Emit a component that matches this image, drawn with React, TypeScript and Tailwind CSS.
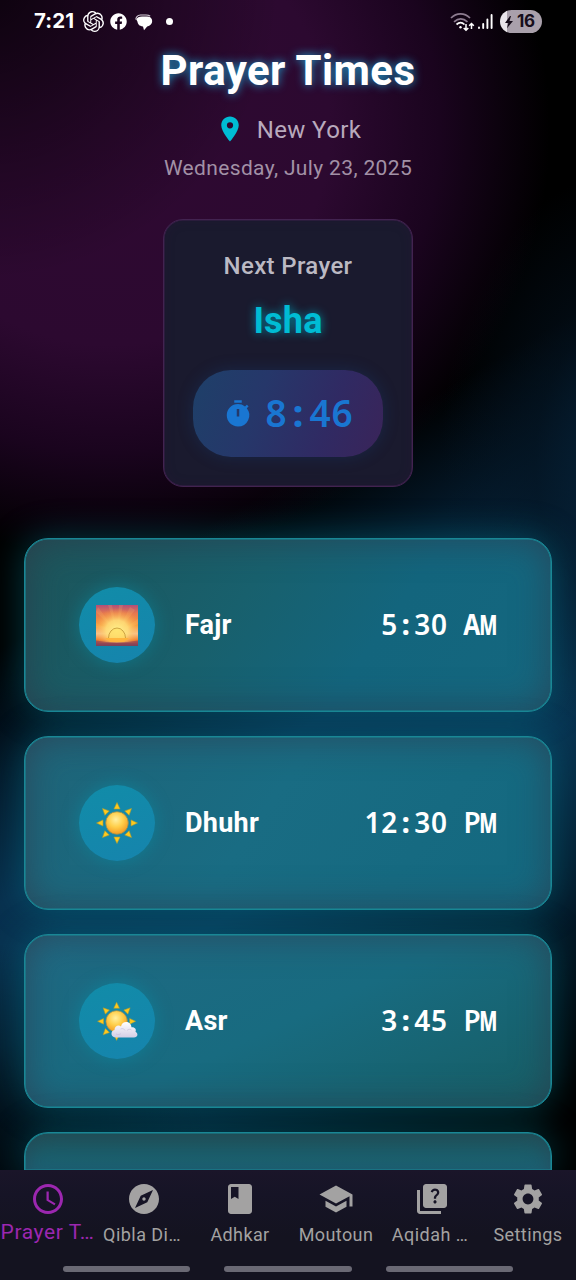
import type { ReactNode } from "react";
import {
  MdAccessTime,
  MdBook,
  MdExplore,
  MdLocationOn,
  MdQuiz,
  MdSchool,
  MdSettings,
  MdTimer,
} from "react-icons/md";
import { FaFacebook } from "react-icons/fa";
import { SiOpenai } from "react-icons/si";

function StatusBar() {
  return (
    <div className="flex h-[43px] items-center justify-between pl-[34px] pr-[34px] text-white">
      <div className="flex items-center">
        <span className="w-[49px] font-['Inter',sans-serif] text-[20.500px] font-bold leading-none tracking-[0.100px]">7:21</span>
        <SiOpenai className="h-[21px] w-[21px]" />
        <FaFacebook className="ml-[6px] h-[17px] w-[17px]" />
        <svg className="ml-[8px] mt-[1px] h-[17px] w-[18px]" viewBox="0 0 18 17">
          <path d="M.8 5.500C1 3 2.800 1.200 5.500 1h5.500c2 0 3.300.4 4.200 1.100" fill="none" stroke="#d9d2dc" strokeWidth="1.100" />
          <path d="M7 2.400h5c3.300 0 5.200 2 5.200 4.700 0 2.900-2 4.800-5 5.300L9 16.200 8 12.400C4 12.200 2.700 10 2.500 7.800L1.300 5.500C2 3.500 4 2.400 7 2.400z" fill="white" />
        </svg>
        <span className="ml-[13px] h-[7px] w-[7px] rounded-full bg-white" />
      </div>
      <div className="flex items-center">
        <svg className="h-[20px] w-[25px]" viewBox="0 0 25 20" fill="none" strokeWidth="1.700">
          <path d="M1 6C6.500.6 14.500.6 20 6" stroke="#8d7c90" />
          <path d="M4 9.800C8.500 5.800 13 5.800 17.500 9.800" stroke="#8d7c90" />
          <path d="M6.500 12.500c2.700-2.400 5.500-2.400 8 0" stroke="#fff" />
          <circle cx="10.500" cy="15.300" r="1.200" fill="white" />
          <path d="M16 12v6M13.700 16l2.300 2.300 2.300-2.300M21.500 17v-5.500M19.200 13.800l2.300-2.300 2.300 2.300" stroke="#fff" strokeWidth="1.500" />
        </svg>
        <svg className="ml-[2px] h-[17px] w-[17px]" viewBox="0 0 17 17" stroke="white" strokeWidth="1.900" strokeLinecap="round">
          <path d="M2 14.500v.5M6.200 11v4M10.400 6.500v8.500M14.600 2v13" />
        </svg>
        <span className="ml-[6px] flex h-[23px] w-[42px] items-center rounded-full bg-[linear-gradient(90deg,#eae6eb_16%,#a9a0ab_16%)] pl-[3px] text-[#160d1a]">
          <svg className="h-[14px] w-[12px]" viewBox="0 0 12 14" fill="currentColor">
            <path d="M7 1 2 8h3.300L4 13.200 10 6H6.500L8 1z" />
          </svg>
          <span className="ml-[2px] font-['Inter',sans-serif] text-[17px] font-bold leading-none tracking-[-0.300px]">16</span>
        </span>
      </div>
    </div>
  );
}

const SUN_RAY = "M24 3.500 20.900 10h6.200z";
const RAY_ANGLES = [0, 45, 90, 135, 180, 225, 270, 315];

function SunDefs({ id }: { id: string }) {
  return (
    <defs>
      <radialGradient id={id} cx="0.450" cy="0.350" r="0.650">
        <stop offset="0" stopColor="#fff0a0" />
        <stop offset="0.500" stopColor="#ffcf4b" />
        <stop offset="1" stopColor="#f39a22" />
      </radialGradient>
    </defs>
  );
}

function Sun() {
  return (
    <svg className="h-[48px] w-[48px]" viewBox="0 0 48 48">
      <SunDefs id="sun" />
      {RAY_ANGLES.map((a) => (
        <path key={a} d={SUN_RAY} transform={`rotate(${a} 24 24)`} fill="#ffc91d" stroke="#a79b35" strokeWidth="0.600" />
      ))}
      <circle cx="24" cy="24" r="11.300" fill="url(#sun)" stroke="#9a8f4f" strokeWidth="0.800" />
    </svg>
  );
}

function CloudySun() {
  return (
    <svg className="h-[48px] w-[48px]" viewBox="0 0 48 48">
      <SunDefs id="cloudySun" />
      <defs>
        <linearGradient id="cloud" x2="0" y2="1">
          <stop offset="0" stopColor="#ffffff" />
          <stop offset="1" stopColor="#d4cde5" />
        </linearGradient>
      </defs>
      <g transform="translate(1.300 2) scale(.93)">
        {RAY_ANGLES.map((a) => (
          <path key={a} d={SUN_RAY} transform={`rotate(${a} 24 24)`} fill="#ffc91d" stroke="#a79b35" strokeWidth="0.600" />
        ))}
        <circle cx="24" cy="24" r="11.500" fill="url(#cloudySun)" stroke="#9a8f4f" strokeWidth="0.800" />
      </g>
      <path d="M23 40.500c-5.500 0-6-6.500-1.500-7.500 0-4 4-5.500 6.500-3.500 1-6 10-6 10.500.8 4-.2 5 2.500 4 4.500 3 1.500 2.500 5.700-1.500 5.700z" fill="url(#cloud)" />
      <path d="M27.500 32c2-1 4 0 4.500 1.500M34 33.500c1.500-1.500 3-1.500 4.500-.5M23 37c2 1 4 .5 5-.5" fill="none" stroke="#c9c1dc" strokeWidth="0.700" />
    </svg>
  );
}

function Sunrise() {
  return (
    <svg className="h-[41px] w-[42px]" viewBox="0 0 42 41">
      <defs>
        <linearGradient id="sky" x2="0" y2="1">
          <stop offset="0" stopColor="#b04f79" />
          <stop offset="0.200" stopColor="#e5774f" />
          <stop offset="0.500" stopColor="#f59a3e" />
          <stop offset="0.700" stopColor="#f6c79a" />
          <stop offset="0.850" stopColor="#ef7d2d" />
          <stop offset="0.930" stopColor="#b04a4a" />
          <stop offset="1" stopColor="#5b405f" />
        </linearGradient>
        <radialGradient id="glow" cx="0.500" cy="0.660" r="0.580">
          <stop offset="0" stopColor="#fff08a" />
          <stop offset="0.450" stopColor="#ffe07a" stopOpacity="0.850" />
          <stop offset="1" stopColor="#ff9a3c" stopOpacity="0" />
        </radialGradient>
      </defs>
      <path d="M0 0h42v41H0z" fill="url(#sky)" />
      <path d="m21 28-9-28h4zM21 28 23 0h4zM21 28 34 2l5 3zM21 28 0 7l2-5zM21 28 42 14v5zM21 28 0 18v4z" fill="#ffdf7a" opacity="0.150" />
      <path d="M0 0h42v38H0z" fill="url(#glow)" />
      <path d="M12.500 33a8.500 10 0 0 1 17 0" fill="#ffd95a" fillOpacity="0.500" stroke="#b98a2c" strokeWidth="0.700" />
      <path d="M0 35.500q10 2 21 2t21-2V41H0z" fill="#8a4458" opacity="0.600" />
      <path d="M9 33h24l-5 4H14z" fill="#ffb23a" opacity="0.900" />
    </svg>
  );
}

function MonoText({ text, cell }: { text: string; cell: string }) {
  return (
    <span className="whitespace-pre">
      {text.split("").map((ch, i) => (
        <span key={i} className={`inline-flex justify-center ${cell}`}>
          {ch === "M" ? (
            <span className="inline-block scale-x-[0.680] font-extrabold">M</span>
          ) : ch === "A" ? (
            <span className="inline-block scale-x-[0.880] font-bold">A</span>
          ) : ch === ":" ? (
            <span className="font-extrabold">:</span>
          ) : (
            ch
          )}
        </span>
      ))}
    </span>
  );
}

function PrayerCard({ name, time, icon, fill }: { name: string; time: string; icon: ReactNode; fill: string }) {
  return (
    <div
      className={`flex h-[174px] shrink-0 items-center rounded-[24px] border border-[#198795] pl-[54px] pr-[54px] shadow-[0_0_36px_rgba(0,130,150,0.450),inset_0_0_0_0.600px_#198795,inset_0_0_36px_rgba(50,50,68,0.600)] ${fill}`}
    >
      <div className="flex h-[76px] w-[76px] items-center justify-center rounded-full bg-[linear-gradient(160deg,#118ca8,#1684ad)] shadow-[0_0_18px_rgba(0,150,175,0.450)]">
        {icon}
      </div>
      <span className="ml-[30px] pt-[1px] text-[27px] font-bold leading-none tracking-[0.250px]">{name}</span>
      <span className="ml-auto pb-[2px] font-['Noto_Sans',sans-serif] text-[28px] font-semibold leading-none">
        <MonoText text={time} cell="w-[16.600px]" />
      </span>
    </div>
  );
}

const TABS = [
  { label: "Prayer T…", Icon: MdAccessTime },
  { label: "Qibla Di…", Icon: MdExplore },
  { label: "Adhkar", Icon: MdBook },
  { label: "Moutoun", Icon: MdSchool },
  { label: "Aqidah …", Icon: MdQuiz },
  { label: "Settings", Icon: MdSettings },
];

function BottomNav() {
  return (
    <nav className="relative z-10 h-[110px] shrink-0 bg-[linear-gradient(180deg,#1a1529_0%,#161426_22%,#141320_60%)] pt-[11px]">
      <div className="grid h-[80px] grid-cols-6">
        {TABS.map(({ label, Icon }, i) => (
          <div key={label} className={`flex flex-col items-center whitespace-nowrap ${i === 0 ? "text-[#9c27b0]" : "text-[#a3a2a2]"}`}>
            <Icon className="h-[36px] w-[36px]" />
            <span
              className={
                i === 0
                  ? "mr-[1px] mt-[3px] text-[21px] leading-[24px] tracking-[0.600px]"
                  : label.endsWith("…")
                    ? "mr-[4px] mt-[7px] text-[18px] leading-[22px] tracking-[0.450px]"
                    : "mt-[7px] text-[18px] leading-[22px] tracking-[0.400px]"
              }
            >
              {label}
            </span>
          </div>
        ))}
      </div>
      <div className="flex justify-center gap-[34px] pt-[5px]">
        <span className="h-[6px] w-[127.500px] rounded-full bg-[#6a6974]" />
        <span className="h-[6px] w-[127.500px] rounded-full bg-[#6a6974]" />
        <span className="h-[6px] w-[127.500px] rounded-full bg-[#6a6974]" />
      </div>
    </nav>
  );
}

export default function App() {
  return (
    <div className="flex h-[1280px] w-[576px] flex-col overflow-hidden bg-black bg-[radial-gradient(circle_300px_at_-20px_-20px,rgba(0,0,0,0.750)_0%,rgba(0,0,0,0.400)_45%,rgba(0,0,0,0)_100%),radial-gradient(circle_260px_at_-40px_1200px,rgba(0,0,0,0.850)_0%,rgba(0,0,0,0.500)_50%,rgba(0,0,0,0)_100%),radial-gradient(ellipse_440px_430px_at_110px_130px,#2f0932_0%,#2c0930_50%,#1a041e_75%,rgba(0,0,0,0)_100%),radial-gradient(ellipse_190px_290px_at_630px_460px,#062238_0%,rgba(4,20,34,0.600)_50%,rgba(0,0,0,0)_100%),linear-gradient(150deg,#000_40%,#04192a_48%,#08304e_56%,#083452_65%,#041b2c_76%,#000_88%)] font-['Roboto',sans-serif] text-white">
      <StatusBar />
      <header className="flex flex-col items-center pt-[1px]">
        <h1 className="text-[42px] font-bold leading-[54px] tracking-[0.400px] [text-shadow:0_0_10px_#1e9fd0]">Prayer Times</h1>
        <div className="mt-[15px] flex h-[32px] items-center">
          <MdLocationOn className="h-[30px] w-[30px] text-[#00bcd4]" />
          <span className="ml-[12px] pt-[1px] text-[24px] leading-[32px] tracking-[0.400px] text-[#b9a9bd]">New York</span>
        </div>
        <p className="mt-[10px] text-[21px] leading-[26px] tracking-[0.350px] text-[#a291a6]">Wednesday, July 23, 2025</p>
      </header>
      <section className="mx-auto mt-[38px] flex h-[268px] w-[250px] shrink-0 flex-col items-center rounded-[20px] border border-[#422350] bg-[#1a1a2e] pt-[31px] shadow-[inset_0_0_0_0.500px_#3b204b,inset_0_0_12px_rgba(50,20,60,0.200)]">
        <h2 className="text-[24px] font-medium leading-[30px] tracking-[0.350px] text-[#bbb9c3]">Next Prayer</h2>
        <p className="mt-[18px] text-[36px] font-bold leading-[44px] tracking-[0.200px] text-[#00bcd4] [text-shadow:0_0_10px_#008ca6]">Isha</p>
        <div className="mt-[27px] flex h-[87px] w-[190px] shrink-0 items-center rounded-[38px] bg-[linear-gradient(110deg,#1e4069,#26376a_35%,#302a63_70%,#3a2459)] pl-[30px] text-[#1976d2] shadow-[0_0_16px_rgba(25,80,150,0.250)]">
          <MdTimer className="h-[30px] w-[30px]" />
          <span className="ml-[12px] pb-[3px] font-['Noto_Sans',sans-serif] text-[37px] font-semibold leading-none">
            <MonoText text="8:46" cell="w-[22px]" />
          </span>
        </div>
      </section>
      <main className="mt-[51px] flex min-h-0 flex-1 flex-col gap-[24px] px-[24px]">
        <PrayerCard name="Fajr" time="5:30 AM" icon={<Sunrise />} fill="bg-[linear-gradient(125deg,#1d5459_0%,#18606d_40%,#13657d_65%,#14677f_100%)]" />
        <PrayerCard name="Dhuhr" time="12:30 PM" icon={<Sun />} fill="bg-[linear-gradient(125deg,#1f6478_0%,#196c83_45%,#13687f_100%)]" />
        <PrayerCard name="Asr" time="3:45 PM" icon={<CloudySun />} fill="bg-[linear-gradient(155deg,#1f6983_0%,#186b80_50%,#165d64_100%)]" />
        <div className="min-h-0 flex-1 rounded-t-[24px] border border-b-0 border-[#198795] bg-[linear-gradient(180deg,#195a60_0%,#1b6174_100%)] shadow-[0_0_36px_rgba(0,130,150,0.450),inset_0_0_0_0.600px_#198795,inset_0_8px_20px_rgba(50,50,68,0.400)]" />
      </main>
      <BottomNav />
    </div>
  );
}
